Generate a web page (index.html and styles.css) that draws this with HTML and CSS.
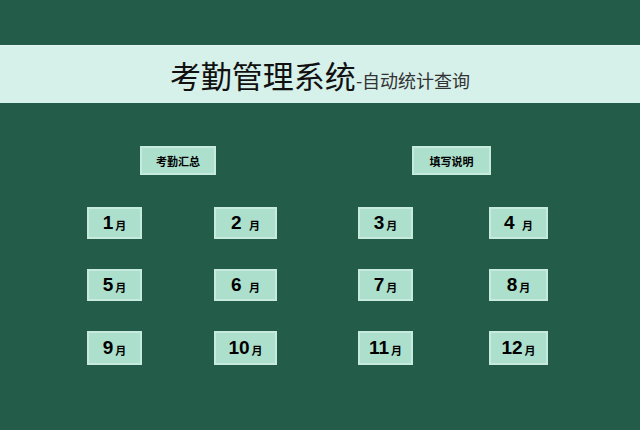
FILE: index.html
```html
<!DOCTYPE html>
<html lang="zh-CN">
<head>
<meta charset="utf-8">
<title>考勤管理系统</title>
<link rel="stylesheet" href="styles.css">
</head>
<body>
<header class="banner">
  <h1 class="title">考勤管理系统</h1><span class="subtitle">-自动统计查询</span>
</header>
<nav class="actions">
  <div class="btn btn-summary">考勤汇总</div>
  <div class="btn btn-help">填写说明</div>
</nav>
<main class="months">
  <div class="btn month c1"><b>1</b><span class="yue">月</span></div>
  <div class="btn month c2"><b>2 </b><span class="yue">月</span></div>
  <div class="btn month c3"><b>3</b><span class="yue">月</span></div>
  <div class="btn month c4"><b>4 </b><span class="yue">月</span></div>
  <div class="btn month c1"><b>5</b><span class="yue">月</span></div>
  <div class="btn month c2"><b>6 </b><span class="yue">月</span></div>
  <div class="btn month c3"><b>7</b><span class="yue">月</span></div>
  <div class="btn month c4"><b>8</b><span class="yue">月</span></div>
  <div class="btn month c1"><b>9</b><span class="yue">月</span></div>
  <div class="btn month c2"><b>10</b><span class="yue">月</span></div>
  <div class="btn month c3"><b>11</b><span class="yue">月</span></div>
  <div class="btn month c4"><b>12</b><span class="yue">月</span></div>
</main>
</body>
</html>
```
FILE: styles.css
```css
html, body {
  margin: 0;
  padding: 0;
}
body {
  width: 640px;
  height: 430px;
  overflow: hidden;
  background: #235d4a;
  font-family: "Noto Sans CJK SC", "Noto Sans", sans-serif;
  color: #111;
}
.banner {
  margin-top: 45px;
  height: 58px;
  box-sizing: border-box;
  background: #d6f0ea;
  border-top: 1px solid #e4f6f1;
  display: flex;
  align-items: baseline;
  justify-content: center;
  padding-top: 9px;
  padding-left: 0;
}
.title {
  margin: 0;
  font-size: 31px;
  font-weight: 400;
  line-height: 40px;
  color: #111;
}
.subtitle {
  font-size: 18px;
  line-height: 40px;
  color: #333;
}
.btn {
  box-sizing: border-box;
  background: #addfcd;
  border: 2px solid #c6ebde;
  display: flex;
  align-items: center;
  justify-content: center;
  color: #000;
}
.actions {
  display: flex;
  margin-top: 43px;
  padding-left: 140px;
  gap: 196px;
}
.actions .btn {
  height: 29px;
  font-size: 11px;
  font-weight: 700;
}
.btn-summary { width: 76px; }
.btn-help { width: 79px; }
.months {
  display: grid;
  grid-template-columns: 127px 144px 131px 59px;
  grid-template-rows: 32px 32px 34px;
  row-gap: 30px;
  margin-top: 32px;
  padding-left: 87px;
  justify-items: start;
}
.month {
  height: 100%;
  align-items: center;
}
.month b {
  font-family: "Liberation Sans", Arial, sans-serif;
  font-size: 19px;
  font-weight: 700;
  white-space: pre;
  line-height: 24px;
}
.month .yue {
  font-size: 11px;
  font-weight: 700;
  margin-left: 2px;
  margin-top: 4px;
}
.c1 { width: 55px; }
.c2 { width: 63px; }
.c3 { width: 55px; }
.c4 { width: 59px; }
```
